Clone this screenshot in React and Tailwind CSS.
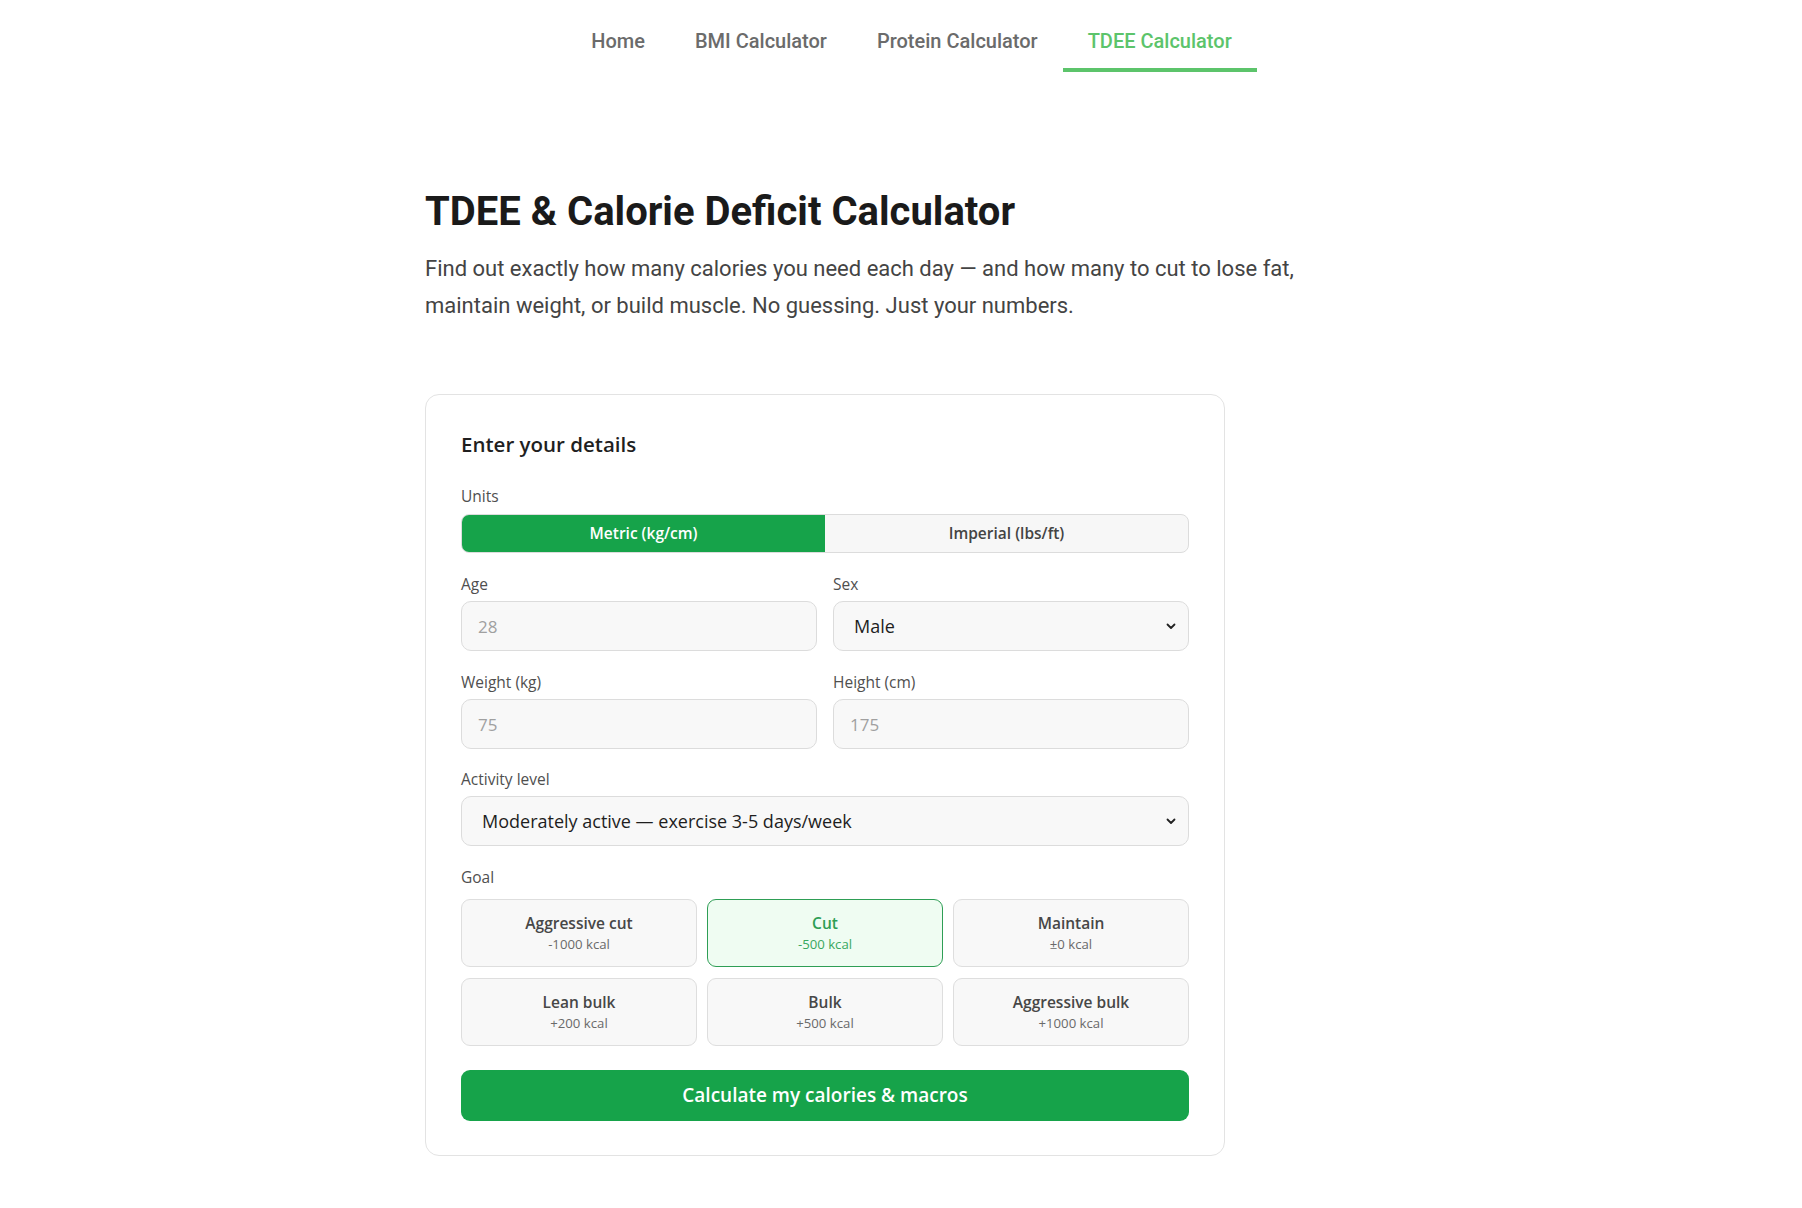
import React from "react";

const roboto = { fontFamily: "Roboto, 'Liberation Sans', sans-serif" };
const cardFont = { fontFamily: "'Open Sans', 'Noto Sans', sans-serif" };

function Chevron() {
  return (
    <svg className="pointer-events-none absolute right-[12px] top-1/2 -translate-y-1/2" width="12" height="12" viewBox="0 0 12 12" fill="none">
      <path d="M2.5 4.5L6 8L9.5 4.5" stroke="#222" strokeWidth="1.8" strokeLinecap="round" strokeLinejoin="round" />
    </svg>
  );
}

function Label({ children, className = "mb-[7px]" }) {
  return <div className={"text-[15.5px] leading-[20px] font-medium text-[#4f4f4f] " + className}>{children}</div>;
}

function TextInput({ placeholder }) {
  return (
    <input
      placeholder={placeholder}
      className="w-full h-[50px] rounded-[10px] border border-[#dcdcdc] bg-[#f8f8f8] px-[16px] text-[17px] text-[#222] placeholder:text-[#a0a0a0] outline-none"
    />
  );
}

function Select({ value, options }) {
  return (
    <div className="relative">
      <select
        defaultValue={value}
        className="w-full h-[50px] appearance-none rounded-[10px] border border-[#dcdcdc] bg-[#f8f8f8] pl-[20px] pr-[36px] text-[18px] text-[#1e1e1e] outline-none"
      >
        {options.map((o) => (
          <option key={o}>{o}</option>
        ))}
      </select>
      <Chevron />
    </div>
  );
}

const goals = [
  ["Aggressive cut", "-1000 kcal", false],
  ["Cut", "-500 kcal", true],
  ["Maintain", "±0 kcal", false],
  ["Lean bulk", "+200 kcal", false],
  ["Bulk", "+500 kcal", false],
  ["Aggressive bulk", "+1000 kcal", false],
];

export default function App() {
  const links = ["Home", "BMI Calculator", "Protein Calculator", "TDEE Calculator"];
  return (
    <div className="min-h-[1208px] bg-white">
      <nav className="flex justify-center pl-[21px]" style={roboto}>
        {links.map((l) => {
          const active = l === "TDEE Calculator";
          return (
            <a
              key={l}
              className={
                "px-[25px] pt-[28px] pb-[13px] leading-[27px] text-[20px] font-medium border-b-4 " +
                (active ? "text-[#5cc46b] border-[#5cc46b]" : "text-[#6b6b6b] border-transparent")
              }
            >
              {l}
            </a>
          );
        })}
      </nav>

      <main className="w-[952px] mx-auto pt-[116px] pb-[50px]">
        <h1 className="text-[40px] leading-[48px] font-bold text-[#1a1a1a]" style={roboto}>
          TDEE &amp; Calorie Deficit Calculator
        </h1>
        <p className="mt-[14px] max-w-[890px] text-[22px] leading-[37px] text-[#444]" style={roboto}>
          Find out exactly how many calories you need each day — and how many to cut to lose fat, maintain weight, or build muscle. No guessing. Just your numbers.
        </p>

        <div
          className="mt-[70px] w-[800px] rounded-[14px] border border-[#e3e3e3] bg-white px-[35px] pt-[35px] pb-[34px]"
          style={cardFont}
        >
          <h2 className="text-[20.5px] leading-[28px] font-semibold text-[#1f1f1f]">Enter your details</h2>

          <div className="mt-[28px]">
            <Label className="mb-[8px]">Units</Label>
            <div className="flex h-[39px] rounded-[8px] border border-[#dcdcdc] bg-[#f7f7f7] overflow-hidden">
              <button className="flex-1 bg-[#16a34a] text-white text-[15.5px] font-semibold">Metric (kg/cm)</button>
              <button className="flex-1 text-[#444] text-[15.5px] font-semibold">Imperial (lbs/ft)</button>
            </div>
          </div>

          <div className="mt-[21px] grid grid-cols-2 gap-x-[16px]">
            <div>
              <Label>Age</Label>
              <TextInput placeholder="28" />
            </div>
            <div>
              <Label>Sex</Label>
              <Select value="Male" options={["Male", "Female"]} />
            </div>
          </div>

          <div className="mt-[21px] grid grid-cols-2 gap-x-[16px]">
            <div>
              <Label>Weight (kg)</Label>
              <TextInput placeholder="75" />
            </div>
            <div>
              <Label>Height (cm)</Label>
              <TextInput placeholder="175" />
            </div>
          </div>

          <div className="mt-[20px]">
            <Label>Activity level</Label>
            <Select
              value="Moderately active — exercise 3-5 days/week"
              options={[
                "Sedentary — little or no exercise",
                "Lightly active — exercise 1-3 days/week",
                "Moderately active — exercise 3-5 days/week",
                "Very active — exercise 6-7 days/week",
              ]}
            />
          </div>

          <div className="mt-[21px]">
            <Label className="mb-[12px]">Goal</Label>
            <div className="grid grid-cols-3 gap-y-[11px] gap-x-[10px]">
              {goals.map(([t, s, active]) => (
                <button
                  key={t}
                  className={
                    "h-[68px] rounded-[9px] border flex flex-col items-center justify-center " +
                    (active ? "border-[#2e9e55] bg-[#effcf2]" : "border-[#dedede] bg-[#f8f8f8]")
                  }
                >
                  <span className={"text-[15.5px] leading-[21px] font-semibold " + (active ? "text-[#2e9e55]" : "text-[#474747]")}>{t}</span>
                  <span className={"mt-[1px] text-[13.2px] leading-[18px] " + (active ? "text-[#3aa85f]" : "text-[#6a6a6a]")}>{s}</span>
                </button>
              ))}
            </div>
          </div>

          <button className="mt-[24px] w-full h-[51px] rounded-[9px] bg-[#16a34a] text-white text-[19px] font-semibold">
            Calculate my calories &amp; macros
          </button>
        </div>
      </main>
    </div>
  );
}
